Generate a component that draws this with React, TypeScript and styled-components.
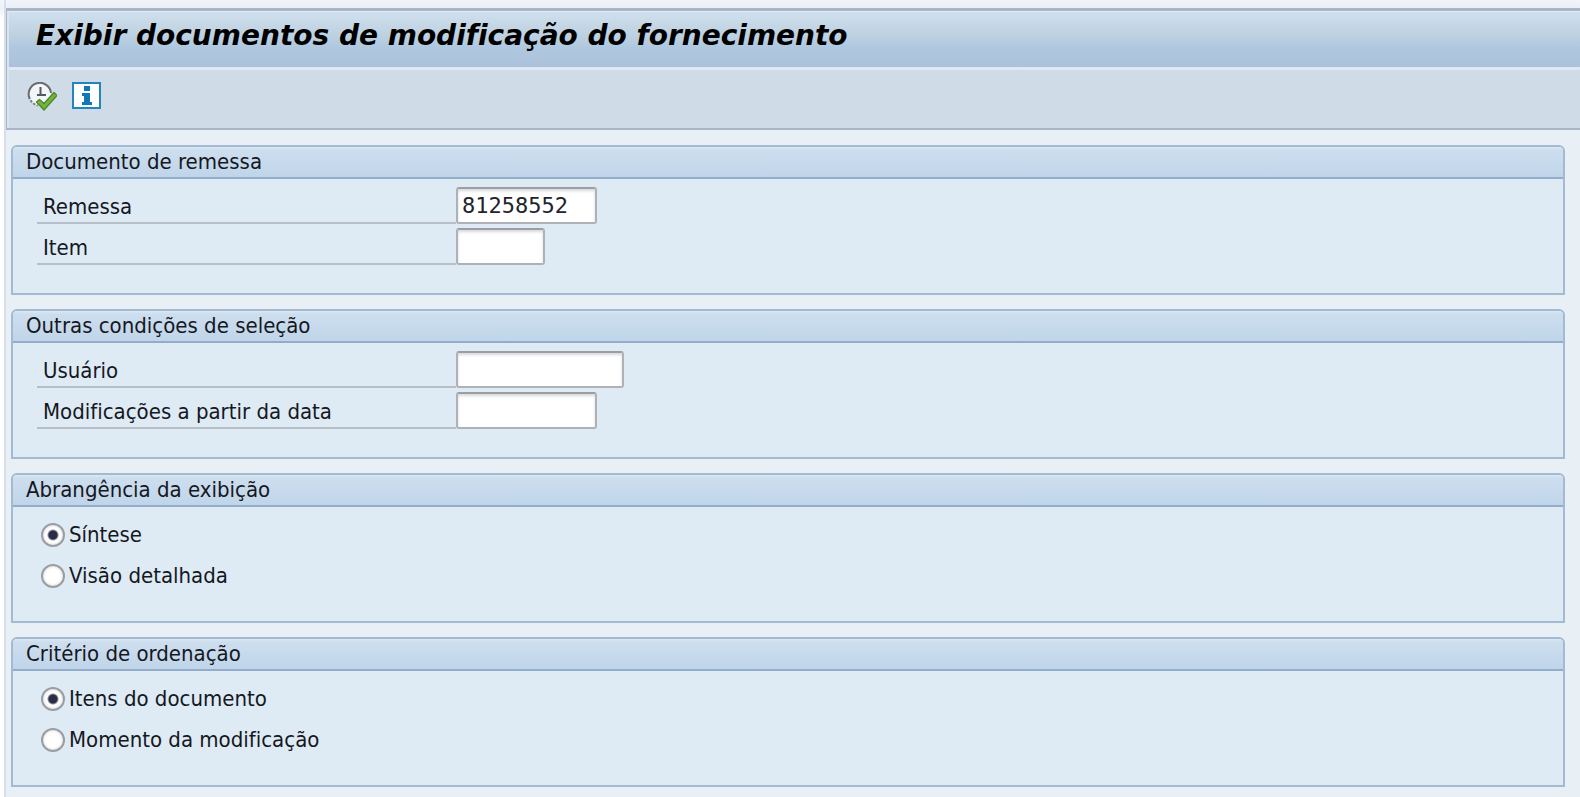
import React from "react";
import styled, { createGlobalStyle } from "styled-components";

const GlobalStyle = createGlobalStyle`
  *, *::before, *::after { box-sizing: border-box; }
  body {
    margin: 0;
    background: #ffffff;
    color: #15181f;
    font-family: "DejaVu Sans Condensed", "DejaVu Sans", sans-serif;
    font-size: 22px;
    font-variant-ligatures: none;
    line-height: 28px;
  }
`;

const Page = styled.div`
  min-height: 100vh;
  padding-left: 4px;
  background: linear-gradient(#f3f6fb, #ecf1f8 8px, #ffffff 20px);
`;

const Window = styled.div`
  display: flex;
  flex-direction: column;
  min-height: 100vh;
  padding-top: 8px;
  border-left: 2px solid #d6deea;
  background: linear-gradient(#f1f4fa, #e8eff7 10px, #e8f0f6 20px);
`;

const Header = styled.header`
  border: solid #a9b6c9;
  border-width: 3px 0 2px 1px;
`;

const TitleBar = styled.div`
  display: flex;
  align-items: center;
  height: 56px;
  padding: 0 27px 7px;
  border-top: 1px solid #e4edf6;
  border-left: 2px solid #d9e4ef;
  background: linear-gradient(#cfdfed, #bfd2e1 40%, #afc8df 65%, #abc1da);
`;

const Title = styled.h1`
  margin: 0;
  color: #000000;
  font-family: "DejaVu Sans", sans-serif;
  font-size: 28px;
  font-style: italic;
  font-weight: 700;
  line-height: 36px;
  white-space: nowrap;
`;

const Toolbar = styled.div`
  display: flex;
  align-items: flex-start;
  gap: 14px;
  height: 61px;
  padding: 12px 18px;
  border-top: 3px solid #e0e8f3;
  border-left: 2px solid #d9e4ef;
  background: #cfdce7;
`;

const IconButton = styled.button`
  display: flex;
  padding: 0;
  border: 0;
  background: none;
`;

const Content = styled.main`
  display: flex;
  flex-direction: column;
  gap: 14px;
  padding: 15px 15px 9px 5px;
`;

const Group = styled.section`
  overflow: hidden;
  border: 2px solid #a3bad3;
  border-radius: 6px 6px 0 0;
  background: #deebf4;
`;

const GroupTitle = styled.h2`
  height: 32px;
  margin: 0;
  padding: 0 13px;
  border-bottom: 2px solid #92adca;
  background: linear-gradient(#dce8f4, #cddeee 3px, #c0d5ea);
  font-size: 22px;
  font-weight: 400;
  line-height: 30px;
`;

const Rows = styled.div`
  display: flex;
  flex-direction: column;
  gap: 4px;
  padding: 8px 24px 28px;
`;

const FieldRow = styled.div`
  display: flex;
  height: 37px;
`;

const FieldLabel = styled.label`
  width: 419px;
  padding: 6px 6px 0;
  border-bottom: 2px solid #b7bec5;
`;

const TextInput = styled.input<{ $width: number }>`
  width: ${(p) => p.$width}px;
  height: 37px;
  padding: 0 4px;
  border: 2px solid #aeb2b6;
  border-top: 2px solid #9b9fa4;
  border-radius: 3px;
  outline: none;
  background: #ffffff;
  box-shadow: inset 0 2px 3px #d8d9dd;
  color: #22242c;
  font-family: "DejaVu Sans Mono", monospace;
  font-size: 22px;
`;

const RadioRow = styled.label`
  display: flex;
  align-items: center;
  gap: 4px;
  height: 37px;
  padding: 2px 0 0 4px;
`;

const Radio = styled.input`
  appearance: none;
  flex: none;
  width: 24px;
  height: 24px;
  margin: 0;
  border: 2px solid #9a9da1;
  border-radius: 50%;
  background: #ffffff;
  box-shadow: inset 0 0 3px #c9cbcf;

  &:checked {
    background: radial-gradient(circle, #2b2d45 0 4px, #ffffff 6px);
  }
`;

function ExecuteIcon() {
  return (
    <svg width="30" height="30" viewBox="0 0 30 30" fill="none" aria-hidden="true">
      <circle cx="13" cy="12.5" r="11" fill="#f3f6f8" />
      <path d="M2.8 17A11.2 11.2 0 1 1 24 11" stroke="#686b70" strokeWidth="2" />
      <path d="M3.6 18.2A11.2 11.2 0 0 0 11 23.5" stroke="#7b7f84" strokeWidth="2" strokeDasharray="2.5 1.5" />
      <path d="M13.5 5v8.5M10 13h9" stroke="#55585d" strokeWidth="2" />
      <path d="M9.5 20l3-2.5 4.5 4L27 10.5l3 3L17 28z" fill="#74b43c" stroke="#4c8a2b" strokeWidth="1.4" strokeLinejoin="round" />
    </svg>
  );
}

function InfoIcon() {
  return (
    <svg width="30" height="30" viewBox="0 0 30 30" aria-hidden="true">
      <rect x="2" y="1" width="27" height="25" fill="#ffffff" stroke="#2186be" strokeWidth="2" />
      <path d="M13 4h6v5h-6zM11 11h8v9h2v3H11v-3h2v-6h-2z" fill="#0f78b8" />
    </svg>
  );
}

interface Field {
  id: string;
  label: string;
  width: number;
  value?: string;
}

function FieldGroup({ title, fields }: { title: string; fields: Field[] }) {
  return (
    <Group>
      <GroupTitle>{title}</GroupTitle>
      <Rows>
        {fields.map((f) => (
          <FieldRow key={f.id}>
            <FieldLabel htmlFor={f.id}>{f.label}</FieldLabel>
            <TextInput id={f.id} type="text" $width={f.width} defaultValue={f.value} />
          </FieldRow>
        ))}
      </Rows>
    </Group>
  );
}

function RadioGroup({ title, name, options }: { title: string; name: string; options: string[] }) {
  return (
    <Group role="radiogroup" aria-labelledby={name}>
      <GroupTitle id={name}>{title}</GroupTitle>
      <Rows>
        {options.map((option, i) => (
          <RadioRow key={option}>
            <Radio type="radio" name={name} defaultChecked={i === 0} />
            {option}
          </RadioRow>
        ))}
      </Rows>
    </Group>
  );
}

export default function App() {
  return (
    <Page>
      <GlobalStyle />
      <Window>
        <Header>
          <TitleBar>
            <Title>Exibir documentos de modificação do fornecimento</Title>
          </TitleBar>
          <Toolbar>
            <IconButton type="button" aria-label="Executar">
              <ExecuteIcon />
            </IconButton>
            <IconButton type="button" aria-label="Informação">
              <InfoIcon />
            </IconButton>
          </Toolbar>
        </Header>
        <Content>
          <FieldGroup
            title="Documento de remessa"
            fields={[
              { id: "remessa", label: "Remessa", width: 141, value: "81258552" },
              { id: "item", label: "Item", width: 89 },
            ]}
          />
          <FieldGroup
            title="Outras condições de seleção"
            fields={[
              { id: "usuario", label: "Usuário", width: 168 },
              { id: "data", label: "Modificações a partir da data", width: 141 },
            ]}
          />
          <RadioGroup title="Abrangência da exibição" name="abrangencia" options={["Síntese", "Visão detalhada"]} />
          <RadioGroup
            title="Critério de ordenação"
            name="criterio"
            options={["Itens do documento", "Momento da modificação"]}
          />
        </Content>
      </Window>
    </Page>
  );
}
